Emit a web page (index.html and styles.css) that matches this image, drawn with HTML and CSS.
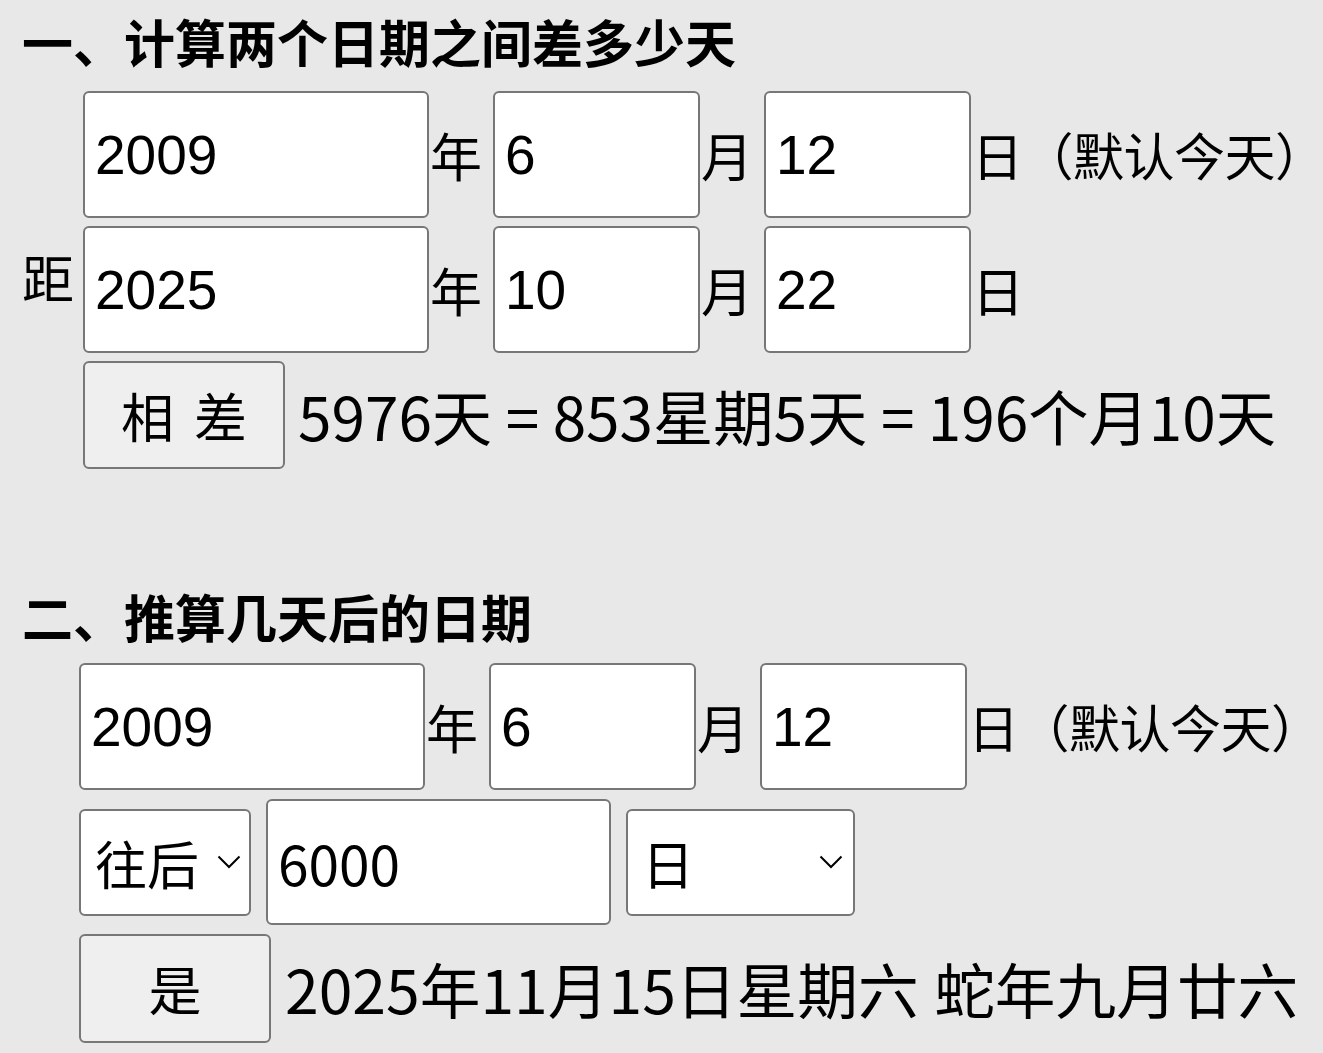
FILE: index.html
```html
<!DOCTYPE html>
<html lang="zh-CN">
<head>
<meta charset="utf-8">
<title>日期计算</title>
<link rel="stylesheet" href="styles.css">
</head>
<body>
<div class="page">
  <h2 class="title title-one">一、计算两个日期之间差多少天</h2>
  <div class="section sec-one">
    <div class="row">
      <span class="lead"></span>
      <input class="field f-year" type="text" value="2009">
      <span class="unit">年</span>
      <input class="field f-small" type="text" value="6">
      <span class="unit">月</span>
      <input class="field f-small" type="text" value="12">
      <span class="unit unit-tail">日（默认今天<span class="paren-end">）</span></span>
    </div>
    <div class="row">
      <span class="lead lead-text">距</span>
      <input class="field f-year" type="text" value="2025">
      <span class="unit">年</span>
      <input class="field f-small" type="text" value="10">
      <span class="unit">月</span>
      <input class="field f-small" type="text" value="22">
      <span class="unit">日</span>
    </div>
    <div class="row">
      <span class="lead"></span>
      <button class="btn btn-diff" type="button">相 差</button>
      <span class="result result-one">5976天 = 853星期5天 = 196个月10天</span>
    </div>
  </div>

  <h2 class="title title-two">二、推算几天后的日期</h2>
  <div class="section sec-two">
    <div class="row">
      <span class="lead"></span>
      <input class="field f-year" type="text" value="2009">
      <span class="unit">年</span>
      <input class="field f-small" type="text" value="6">
      <span class="unit">月</span>
      <input class="field f-small" type="text" value="12">
      <span class="unit unit-tail">日（默认今天<span class="paren-end">）</span></span>
    </div>
    <div class="row row-mid">
      <span class="lead"></span>
      <span class="sel sel-dir">
        <select class="select"><option>往后</option><option>往前</option></select>
        <svg class="chev" viewBox="0 0 24 14" width="24" height="14"><path d="M1.5 1.5 L12 12 L22.5 1.5" fill="none" stroke="#000" stroke-width="2"/></svg>
      </span>
      <input class="field f-num" type="text" value="6000">
      <span class="sel sel-unit">
        <select class="select"><option>日</option><option>月</option><option>年</option></select>
        <svg class="chev" viewBox="0 0 24 14" width="24" height="14"><path d="M1.5 1.5 L12 12 L22.5 1.5" fill="none" stroke="#000" stroke-width="2"/></svg>
      </span>
    </div>
    <div class="row">
      <span class="lead"></span>
      <button class="btn btn-yes" type="button">是</button>
      <span class="result result-two">2025年11月15日星期六 蛇年九月廿六</span>
    </div>
  </div>
</div>
</body>
</html>
```
FILE: styles.css
```css
html, body {
  margin: 0;
  padding: 0;
  background: #e8e8e8;
}

body {
  font-family: "Noto Sans CJK SC", "Noto Sans", sans-serif;
  color: #000;
}

.page {
  padding: 11px 0 0 22px;
}

.title {
  margin: 0;
  font-size: 51px;
  line-height: 60px;
  font-weight: 700;
  white-space: nowrap;
}

.title-one {
  margin-bottom: 20px;
}

.title-two {
  margin-top: 117px;
  margin-bottom: 17px;
}

.section {
  display: flex;
  flex-direction: column;
}

.sec-one .row + .row {
  margin-top: 8px;
}

.sec-two .row + .row {
  margin-top: 9px;
}

.row {
  display: flex;
  align-items: center;
  white-space: nowrap;
}

.lead {
  flex: 0 0 auto;
  font-size: 52px;
  line-height: 1;
}

.sec-one .lead {
  width: 61px;
}

.sec-two .lead {
  width: 57px;
}

.lead-text {
  margin-top: -26px;
}

.field {
  box-sizing: border-box;
  height: 127px;
  margin: 0;
  padding: 0 10px;
  border: 2px solid #777;
  border-radius: 6px;
  background: #fff;
  color: #000;
  font-family: "Liberation Sans", Arial, sans-serif;
  font-size: 55px;
  outline: none;
}

.f-year {
  width: 346px;
}

.f-small {
  width: 207px;
}

.f-num {
  width: 345px;
  height: 126px;
  margin: 0 15px;
  font-family: "Noto Sans CJK SC", sans-serif;
}

.unit {
  font-size: 52px;
  line-height: 1;
  margin: 0 11px 0 1px;
}

.unit-tail {
  font-size: 51px;
  letter-spacing: -0.5px;
  margin-right: 0;
}

.paren-end {
  letter-spacing: -24px;
}

.sel {
  position: relative;
  display: inline-block;
  flex: 0 0 auto;
}

.select {
  display: block;
  box-sizing: border-box;
  height: 107px;
  margin: 0;
  padding: 0 0 0 14px;
  border: 2px solid #777;
  border-radius: 6px;
  background: #fff;
  color: #000;
  font-family: "Noto Sans CJK SC", sans-serif;
  font-size: 52px;
  -webkit-appearance: none;
  appearance: none;
  outline: none;
}

.sel-dir .select {
  width: 172px;
}

.sel-unit .select {
  width: 229px;
}

.chev {
  position: absolute;
  top: 46px;
  pointer-events: none;
}

.sel-dir .chev {
  right: 10px;
}

.sel-unit .chev {
  right: 12px;
}

.btn {
  box-sizing: border-box;
  margin: 0;
  padding: 0;
  border: 2px solid #777;
  border-radius: 6px;
  background: #efefef;
  color: #000;
  font-family: "Noto Sans CJK SC", sans-serif;
  font-size: 53px;
  line-height: 1;
}

.btn-diff {
  width: 202px;
  height: 108px;
  word-spacing: 8px;
}

.btn-yes {
  width: 192px;
  height: 109px;
}

.result {
  line-height: 1;
}

.result-one {
  margin-left: 13px;
  font-size: 60.3px;
}

.result-two {
  margin-left: 14px;
  font-size: 60.7px;
  word-spacing: 2px;
}
```
